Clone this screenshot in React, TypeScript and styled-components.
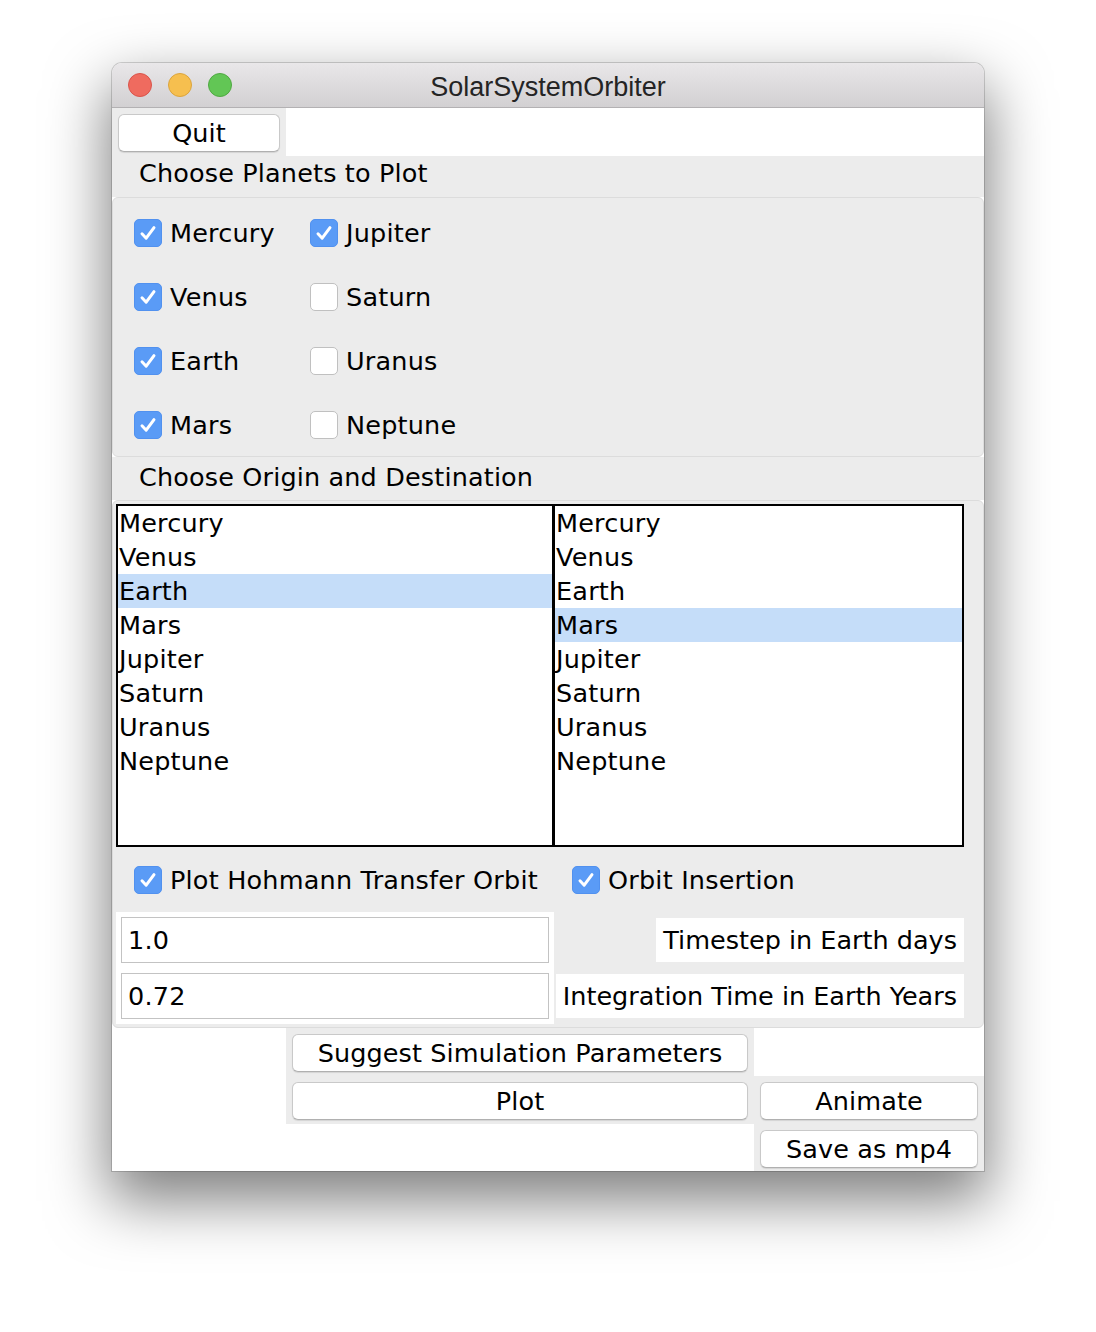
import React from 'react';
import styled, { createGlobalStyle } from 'styled-components';

const GlobalStyle = createGlobalStyle`
  html, body { margin: 0; padding: 0; background: #ffffff; }
  body { font-family: "DejaVu Sans", Verdana, sans-serif; color: #000; letter-spacing: 0.2px; }
  * { box-sizing: border-box; }
`;

const FONT = `"DejaVu Sans", Verdana, sans-serif`;

const Page = styled.div`
  width: 1096px;
  height: 1332px;
  padding: 63px 0 0 112px;
  background: #ffffff;
  overflow: hidden;
`;

const Window = styled.div`
  width: 872px;
  height: 1108px;
  border-radius: 10px 10px 0 0;
  overflow: hidden;
  background: #ffffff;
  display: flex;
  flex-direction: column;
  box-shadow: 0 0 0 1px rgba(0, 0, 0, 0.16), 0 26px 60px 4px rgba(0, 0, 0, 0.5);
`;

const TitleBar = styled.div`
  flex: none;
  height: 45px;
  display: grid;
  grid-template-columns: 1fr auto 1fr;
  align-items: center;
  padding: 3px 16px 0;
  background: linear-gradient(#e9e7e9, #d2d0d2);
  border-bottom: 1px solid #b3b1b3;
`;

const Lights = styled.div`
  display: flex;
  gap: 16px;
  margin-top: -3px;
`;

const Light = styled.span<{ $fill: string; $edge: string }>`
  width: 24px;
  height: 24px;
  border-radius: 50%;
  background: ${(p) => p.$fill};
  border: 1px solid ${(p) => p.$edge};
`;

const Title = styled.div`
  font-family: "Liberation Sans", Arial, sans-serif;
  font-size: 27px;
  letter-spacing: 0;
  color: #242424;
  line-height: 30px;
`;

const Content = styled.div`
  flex: 1;
  display: flex;
  flex-direction: column;
  background: #ffffff;
`;

const QuitRow = styled.div`
  height: 48px;
  display: flex;
`;

const ButtonCell = styled.div<{ $col?: number; $row?: number; $bottom?: number }>`
  background: #ececec;
  padding: 6px 6px ${(p) => p.$bottom ?? 4}px 6px;
  ${(p) => (p.$col ? `grid-column: ${p.$col};` : '')}
  ${(p) => (p.$row ? `grid-row: ${p.$row};` : '')}
`;

const QuitCell = styled(ButtonCell)`
  width: 174px;
`;

const Button = styled.button`
  width: 100%;
  height: 38px;
  margin: 0;
  padding: 0;
  background: #ffffff;
  border: 1px solid #c9c9c9;
  border-bottom-color: #b0b0b0;
  border-radius: 6px;
  box-shadow: 0 1px 1px rgba(0, 0, 0, 0.1);
  font-family: ${FONT};
  font-size: 25.5px;
  letter-spacing: 0.1px;
  line-height: 34px;
  color: #000;
`;

const SectionLabel = styled.div<{ $h: number; $top: number }>`
  height: ${(p) => p.$h}px;
  padding: ${(p) => p.$top}px 0 0 27px;
  background: #ececec;
  font-size: 25.5px;
  letter-spacing: 0.15px;
  line-height: 30px;
  white-space: nowrap;
`;

const Frame = styled.div<{ $h: number }>`
  height: ${(p) => p.$h}px;
  background: #ececec;
  border: 1px solid #dcdcdc;
  border-radius: 6px;
`;

const CheckGrid = styled.div`
  display: grid;
  grid-template-columns: 176px auto;
  grid-auto-rows: 64px;
  align-items: center;
  padding: 3px 0 0 21px;
`;

const CheckItem = styled.label`
  display: flex;
  align-items: center;
  gap: 8px;
  font-size: 25.5px;
  line-height: 30px;
  white-space: nowrap;
`;

const Box = styled.span<{ $checked: boolean }>`
  flex: none;
  width: 28px;
  height: 28px;
  border-radius: 5px;
  display: flex;
  align-items: center;
  justify-content: center;
  overflow: hidden;
  background: ${(p) => (p.$checked ? '#5a9bf6' : '#ffffff')};
  border: 1px solid ${(p) => (p.$checked ? '#5191ef' : '#c0c0c0')};
`;

const Inner = styled.div`
  padding: 3px 19px 3px 3px;
`;

const TwoCols = styled.div<{ $h: number }>`
  height: ${(p) => p.$h}px;
  display: grid;
  grid-template-columns: 438px 410px;
`;

const Listbox = styled.div<{ $overlap?: boolean }>`
  height: 343px;
  background: #ffffff;
  border: 2px solid #000000;
  ${(p) => (p.$overlap ? 'margin-left: -1px; width: 411px;' : '')}
`;

const ListItem = styled.div<{ $selected: boolean }>`
  height: 34px;
  line-height: 34px;
  padding-left: 1px;
  font-size: 25.5px;
  white-space: nowrap;
  background: ${(p) => (p.$selected ? '#c5ddf9' : 'transparent')};
`;

const CheckCell = styled.div`
  display: flex;
  align-items: center;
  padding-left: 18px;
`;

const EntryGrid = styled.div`
  display: grid;
  grid-template-columns: 438px 410px;
  grid-template-rows: 56px 56px;
`;

const EntryCell = styled.div`
  background: #ffffff;
  padding: 5px;
`;

const Entry = styled.div`
  height: 46px;
  border: 1px solid #c3c3c3;
  background: #ffffff;
  padding-left: 6px;
  font-size: 25.5px;
  line-height: 44px;
`;

const FieldLabel = styled.div`
  justify-self: end;
  align-self: center;
  height: 44px;
  padding: 0 7px 0 7px;
  background: #ffffff;
  font-size: 25.5px;
  letter-spacing: 0;
  line-height: 44px;
  white-space: nowrap;
`;

const BottomGrid = styled.div`
  display: grid;
  grid-template-columns: 174px 468px 230px;
  grid-template-rows: 48px 48px 47px;
`;

const Check = () => (
  <svg width="26" height="26" viewBox="0 0 26 26">
    <path d="M7 13.8 L11.2 18.2 L19 7.6" fill="none" stroke="#ffffff" strokeWidth="3" strokeLinecap="round" strokeLinejoin="round" />
  </svg>
);

const CheckBox = ({ label, checked }: { label: string; checked: boolean }) => (
  <CheckItem>
    <Box $checked={checked}>{checked && <Check />}</Box>
    <span>{label}</span>
  </CheckItem>
);

const planets = ['Mercury', 'Venus', 'Earth', 'Mars', 'Jupiter', 'Saturn', 'Uranus', 'Neptune'];
const grid: [string, boolean][] = [
  ['Mercury', true],
  ['Jupiter', true],
  ['Venus', true],
  ['Saturn', false],
  ['Earth', true],
  ['Uranus', false],
  ['Mars', true],
  ['Neptune', false],
];

export default function App() {
  return (
    <Page>
      <GlobalStyle />
      <Window>
        <TitleBar>
          <Lights>
            <Light $fill="#ef6b5f" $edge="#d9544b" />
            <Light $fill="#f6bf4f" $edge="#dba43d" />
            <Light $fill="#62c655" $edge="#50a842" />
          </Lights>
          <Title>SolarSystemOrbiter</Title>
          <span />
        </TitleBar>
        <Content>
          <QuitRow>
            <QuitCell>
              <Button>Quit</Button>
            </QuitCell>
          </QuitRow>
          <SectionLabel $h={41} $top={2}>Choose Planets to Plot</SectionLabel>
          <Frame $h={260}>
            <CheckGrid>
              {grid.map(([name, on]) => (
                <CheckBox key={name} label={name} checked={on} />
              ))}
            </CheckGrid>
          </Frame>
          <SectionLabel $h={43} $top={5}>Choose Origin and Destination</SectionLabel>
          <Frame $h={528}>
            <Inner>
              <TwoCols $h={343}>
                <Listbox>
                  {planets.map((p) => (
                    <ListItem key={p} $selected={p === 'Earth'}>{p}</ListItem>
                  ))}
                </Listbox>
                <Listbox $overlap>
                  {planets.map((p) => (
                    <ListItem key={p} $selected={p === 'Mars'}>{p}</ListItem>
                  ))}
                </Listbox>
              </TwoCols>
              <TwoCols $h={65}>
                <CheckCell>
                  <CheckBox label="Plot Hohmann Transfer Orbit" checked />
                </CheckCell>
                <CheckCell>
                  <CheckBox label="Orbit Insertion" checked />
                </CheckCell>
              </TwoCols>
              <EntryGrid>
                <EntryCell>
                  <Entry>1.0</Entry>
                </EntryCell>
                <FieldLabel>Timestep in Earth days</FieldLabel>
                <EntryCell>
                  <Entry>0.72</Entry>
                </EntryCell>
                <FieldLabel>Integration Time in Earth Years</FieldLabel>
              </EntryGrid>
            </Inner>
          </Frame>
          <BottomGrid>
            <ButtonCell $col={2} $row={1}>
              <Button>Suggest Simulation Parameters</Button>
            </ButtonCell>
            <ButtonCell $col={2} $row={2}>
              <Button>Plot</Button>
            </ButtonCell>
            <ButtonCell $col={3} $row={2}>
              <Button>Animate</Button>
            </ButtonCell>
            <ButtonCell $col={3} $row={3} $bottom={3}>
              <Button>Save as mp4</Button>
            </ButtonCell>
          </BottomGrid>
        </Content>
      </Window>
    </Page>
  );
}
